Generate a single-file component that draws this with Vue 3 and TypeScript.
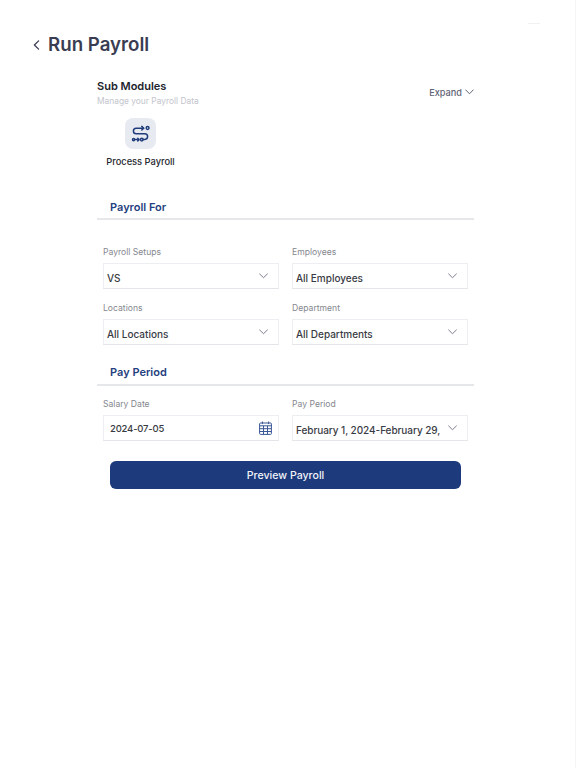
<script setup lang="ts">
interface Field {
  label: string
  value: string
  kind?: 'date' | 'long'
}

const forRows: Field[][] = [
  [
    { label: 'Payroll Setups', value: 'VS' },
    { label: 'Employees', value: 'All Employees' },
  ],
  [
    { label: 'Locations', value: 'All Locations' },
    { label: 'Department', value: 'All Departments' },
  ],
]

const periodRow: Field[] = [
  { label: 'Salary Date', value: '2024-07-05', kind: 'date' },
  { label: 'Pay Period', value: 'February 1, 2024-February 29,', kind: 'long' },
]
</script>

<template>
  <div class="page">
    <div class="topmark"></div>
    <header class="head">
      <svg class="back" width="7" height="10" viewBox="0 0 7 10" fill="none">
        <path d="M5.6.9 1.4 5l4.2 4.1" stroke="#3a3d52" stroke-width="1.3" stroke-linecap="round" stroke-linejoin="round" />
      </svg>
      <h1>Run Payroll</h1>
    </header>

    <main class="content">
      <div class="modules">
        <div>
          <div class="mod-title">Sub Modules</div>
          <div class="mod-sub">Manage your Payroll Data</div>
        </div>
        <div class="expand">
          Expand
          <svg width="9" height="6" viewBox="0 0 9 6" fill="none">
            <path d="M.7.9 4.5 4.8 8.3.9" stroke="#5f6475" stroke-width="1" stroke-linecap="round" stroke-linejoin="round" />
          </svg>
        </div>
      </div>

      <div class="tile-wrap">
        <div class="tile">
          <svg width="20" height="20" viewBox="0 0 20 20" fill="none" stroke="#1f3c7c" stroke-width="1.5" stroke-linecap="round" stroke-linejoin="round">
            <path d="M12.6 4.2H5.2a2.6 2.6 0 0 0 0 5.6h8.6a2.6 2.6 0 0 1 0 5.6h-1.6" />
            <path d="M10.8 2.4l1.9 1.8-1.9 1.8" />
            <circle cx="16.6" cy="4" r="1.4" />
            <circle cx="2.6" cy="15.6" r="1.1" />
            <circle cx="10.8" cy="15.6" r="1.3" />
            <path d="M4.6 15.6h3.4M6.8 14.3l1.3 1.3-1.3 1.3" />
          </svg>
        </div>
        <div class="tile-label">Process Payroll</div>
      </div>

      <section class="sec sec-first">
        <h2>Payroll For</h2>
        <div class="rows">
          <div v-for="(row, i) in forRows" :key="i" class="row">
            <div v-for="f in row" :key="f.label" class="field">
              <label>{{ f.label }}</label>
              <div class="box">
                <span class="val">{{ f.value }}</span>
                <svg class="chev" width="9" height="6" viewBox="0 0 11 7" fill="none">
                  <path d="M.8 1 5.5 5.6 10.2 1" stroke="#6d717f" stroke-width="1.1" stroke-linecap="round" stroke-linejoin="round" />
                </svg>
              </div>
            </div>
          </div>
        </div>
      </section>

      <section class="sec sec-second">
        <h2>Pay Period</h2>
        <div class="row">
          <div v-for="f in periodRow" :key="f.label" class="field">
            <label>{{ f.label }}</label>
            <div class="box" :class="{ datebox: f.kind === 'date', longbox: f.kind === 'long' }">
              <span class="val">{{ f.value }}</span>
              <svg v-if="f.kind === 'date'" class="cal" width="13" height="14" viewBox="0 0 13 14" fill="none" stroke="#3a5796" stroke-width="1">
                <rect x=".6" y="2" width="11.8" height="11.4" rx="1" />
                <path d="M.6 4.8h11.8M.6 7.7h11.8M.6 10.5h11.8M4.5 4.8v8.6M8.5 4.8v8.6M3.4.5v2.6M9.6.5v2.6" />
              </svg>
              <svg v-else class="chev" width="9" height="6" viewBox="0 0 11 7" fill="none">
                <path d="M.8 1 5.5 5.6 10.2 1" stroke="#6d717f" stroke-width="1.1" stroke-linecap="round" stroke-linejoin="round" />
              </svg>
            </div>
          </div>
        </div>
        <button class="preview" type="button">Preview Payroll</button>
      </section>
    </main>
  </div>
</template>

<style>
html,
body {
  margin: 0;
  background: #fff;
}
</style>

<style scoped>
.page {
  position: relative;
  box-sizing: border-box;
  width: 576px;
  height: 768px;
  padding-top: 33px;
  overflow: hidden;
  background: #fff;
  border-right: 1px solid #f5f5f7;
  font-family: Inter, "Liberation Sans", sans-serif;
  color: #2c2f3a;
}
.topmark {
  position: absolute;
  left: 528px;
  top: 23px;
  width: 12px;
  height: 1px;
  background: #f1f1f3;
}
.head {
  display: flex;
  align-items: center;
  height: 24px;
  padding-left: 33px;
}
.back {
  margin-right: 8px;
}
h1 {
  margin: 0;
  font-size: 18.7px;
  line-height: 24px;
  font-weight: 600;
  color: #3a3d52;
}
.content {
  width: 377px;
  margin: 22px 0 0 97px;
}
.modules {
  display: flex;
  justify-content: space-between;
  height: 24px;
}
.mod-title {
  font-size: 11px;
  line-height: 15px;
  font-weight: 600;
  color: #22242c;
}
.mod-sub {
  font-size: 8.4px;
  line-height: 12px;
  margin-top: 1px;
  color: #c3c5cc;
}
.expand {
  display: flex;
  align-items: center;
  gap: 3px;
  height: 14px;
  margin-top: 6px;
  font-size: 9.2px;
  font-weight: 500;
  color: #5f6475;
}
.tile-wrap {
  width: 87px;
  margin-top: 15px;
  display: flex;
  flex-direction: column;
  align-items: center;
}
.tile {
  display: flex;
  align-items: center;
  justify-content: center;
  width: 31px;
  height: 31px;
  border-radius: 8px;
  background: #e8eaf2;
}
.tile-label {
  margin-top: 7px;
  font-size: 9.3px;
  line-height: 12px;
  font-weight: 500;
  white-space: nowrap;
  color: #26282f;
}
.sec h2 {
  margin: 0;
  box-sizing: border-box;
  height: 21px;
  padding-left: 13px;
  border-bottom: 2px solid #e6e7ea;
  font-size: 11px;
  line-height: 16px;
  font-weight: 600;
  color: #253f80;
}
.sec-first {
  margin-top: 31px;
}
.sec-second {
  margin-top: 19px;
}
.sec-second h2 {
  height: 22px;
}
.rows {
  display: flex;
  flex-direction: column;
  gap: 13px;
  margin-top: 26px;
}
.sec-second .row {
  margin-top: 12px;
}
.row {
  display: flex;
  gap: 13px;
  padding: 0 6px;
}
.field {
  width: 176px;
}
label {
  display: block;
  height: 12px;
  font-size: 8.6px;
  line-height: 12px;
  color: #85878f;
}
.box {
  display: flex;
  align-items: center;
  justify-content: space-between;
  box-sizing: border-box;
  height: 26px;
  margin-top: 5px;
  padding: 0 10px 0 3px;
  border: 1px solid #eceef1;
  border-bottom-color: #e4e5e9;
  background: #fff;
}
.val {
  min-width: 0;
  padding-top: 4px;
  white-space: nowrap;
  font-size: 10px;
  font-weight: 500;
  color: #393b44;
}
.datebox {
  padding: 0 6px 0 6px;
}
.datebox .val {
  padding-top: 1px;
  font-size: 9.5px;
  letter-spacing: -0.2px;
}
.longbox .val {
  letter-spacing: -0.06px;
}
.chev {
  flex: none;
}
.preview {
  display: block;
  box-sizing: border-box;
  width: 351px;
  height: 28px;
  margin: 20px 0 0 13px;
  border: 0;
  border-radius: 6px;
  background: #1c3a7c;
  font-family: inherit;
  font-size: 10.6px;
  font-weight: 500;
  color: #f1f3f8;
}
</style>
